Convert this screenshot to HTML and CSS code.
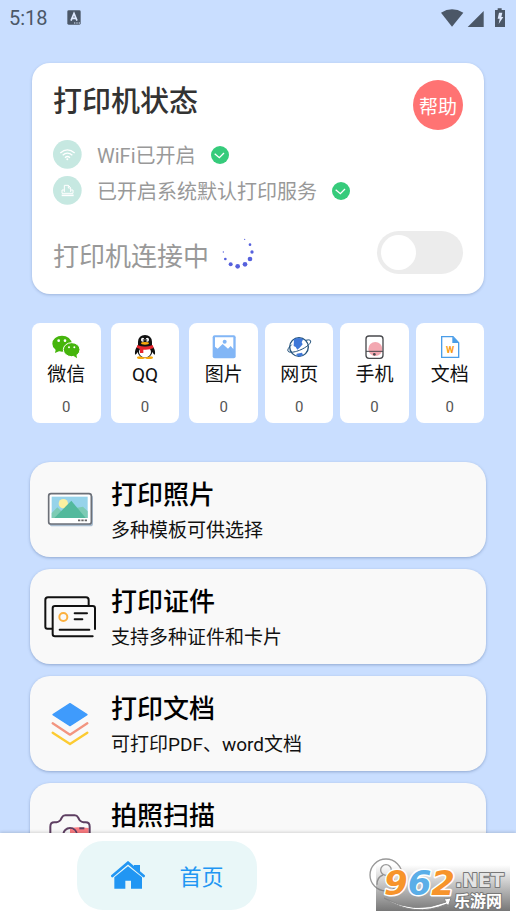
FILE: index.html
```html
<!DOCTYPE html>
<html lang="zh-CN">
<head>
    <meta charset="UTF-8">
    <meta name="viewport" content="width=device-width, initial-scale=1.0">
    <title>打印机</title>
    <link rel="stylesheet" href="styles.css">
</head>
<body>

    <!-- system bar -->
    <header class="sysbar">
        <span class="time">5:18</span>
        <svg class="ime" width="14" height="15" viewBox="0 0 42 45">
            <rect x="1" y="1" width="40" height="43" rx="4" fill="#4b5767"/>
            <path d="M12 32 L21 10 L30 32 M15 25 H27" fill="none" stroke="#dfeaff" stroke-width="5"/>
            <path d="M21 39h4m3 0h4m3 0h4" stroke="#dfeaff" stroke-width="3"/>
        </svg>
        <svg class="signals" width="66" height="20" viewBox="0 0 198 60">
            <path d="M0 14 Q33 -6 67 14 L33 56 Z" fill="#4b5767"/>
            <path d="M80 57 L128 9 V57 Z" fill="#4b5767"/>
            <path d="M170 1h12v5h10v51h-30V6h8z" fill="#4b5767"/>
            <path d="M174 14h10l-3 13h6l-14 21 3-16h-6z" fill="#dfeaff"/>
        </svg>
    </header>

    <main class="content">
        <!-- printer status -->
        <section class="status">
            <div class="status-head">
                <h1>打印机状态</h1>
                <button class="help" type="button">帮助</button>
            </div>
            <ul class="checks">
                <li>
                    <svg width="29" height="29" viewBox="0 0 87 87">
                        <circle cx="43" cy="43" r="43" fill="#c6e8e1"/>
                        <g fill="none" stroke="#fff" stroke-width="4">
                            <path d="M22 39 Q43 20 65 39"/>
                            <path d="M29 46 Q43 33 58 46"/>
                            <path d="M36 53 Q43 46 51 53"/>
                        </g>
                        <circle cx="43" cy="58" r="3" fill="#fff"/>
                    </svg>
                    <span>WiFi已开启</span>
                    <svg width="18" height="18" viewBox="0 0 54 54">
                        <circle cx="27" cy="27" r="27" fill="#36cb7b"/>
                        <path d="M11 23 L25 35 L39 21" fill="none" stroke="#fff" stroke-width="4"/>
                    </svg>
                </li>
                <li>
                    <svg width="29" height="29" viewBox="0 0 87 87">
                        <circle cx="43" cy="43" r="43" fill="#c6e8e1"/>
                        <g fill="none" stroke="#fff" stroke-width="3">
                            <path d="M34 48V28H46L53 35V48M46 28V36H53"/>
                            <path d="M34 42H27V52H60V42H53"/>
                            <path d="M26 58H62" stroke-width="5"/>
                        </g>
                    </svg>
                    <span>已开启系统默认打印服务</span>
                    <svg width="18" height="18" viewBox="0 0 54 54">
                        <circle cx="27" cy="27" r="27" fill="#36cb7b"/>
                        <path d="M11 23 L25 35 L39 21" fill="none" stroke="#fff" stroke-width="4"/>
                    </svg>
                </li>
            </ul>
            <div class="connect">
                <label for="link">打印机连接中</label>
                <svg width="32" height="32" viewBox="0 0 96 96" fill="#5661dd">
                    <circle cx="68" cy="7" r="2"/>
                    <circle cx="84" cy="23" r="4"/>
                    <circle cx="90" cy="45" r="5"/>
                    <circle cx="84" cy="66" r="7"/>
                    <circle cx="69" cy="82" r="7"/>
                    <circle cx="47" cy="88" r="7"/>
                    <circle cx="26" cy="82" r="6"/>
                    <circle cx="10" cy="66" r="4"/>
                    <circle cx="4" cy="45" r="2"/>
                </svg>
                <input class="switch" type="checkbox" id="link">
            </div>
        </section>

        <!-- sources -->
        <section class="sources">
            <div class="group">
                <button class="tile" type="button">
                    <svg width="28" height="24" viewBox="0 0 84 72">
                        <path d="M12 40 L9 54 L24 47Z" fill="#45b50c"/>
                        <ellipse cx="30" cy="26" rx="29" ry="24" fill="#45b50c"/>
                        <circle cx="20" cy="17" r="4" fill="#fff"/>
                        <circle cx="39" cy="17" r="4" fill="#fff"/>
                        <ellipse cx="59" cy="44" rx="25" ry="21" fill="#45b50c" stroke="#fff" stroke-width="3"/>
                        <path d="M64 62 L75 70 L73 56Z" fill="#45b50c"/>
                        <circle cx="51" cy="37" r="3" fill="#fff"/>
                        <circle cx="67" cy="37" r="3" fill="#fff"/>
                    </svg>
                    <span class="label">微信</span>
                    <span class="count">0</span>
                </button>
                <button class="tile" type="button">
                    <svg width="28" height="24" viewBox="0 0 84 72">
                        <ellipse cx="30" cy="68" rx="12" ry="4" fill="#f9a90a"/>
                        <ellipse cx="54" cy="68" rx="12" ry="4" fill="#f9a90a"/>
                        <path d="M19 34 Q10 45 12 59 Q16 59 20 51 Q22 67 42 67 Q62 67 64 51 Q68 59 72 59 Q74 45 65 34Z" fill="#111"/>
                        <ellipse cx="42" cy="51" rx="18" ry="16" fill="#fff"/>
                        <path d="M21 35 V20 Q23 0 42 0 Q61 0 63 20 V35Z" fill="#111"/>
                        <ellipse cx="35" cy="14" rx="5" ry="6" fill="#fff"/>
                        <ellipse cx="49" cy="14" rx="5" ry="6" fill="#fff"/>
                        <circle cx="37" cy="15" r="2" fill="#111"/>
                        <circle cx="47" cy="15" r="2" fill="#111"/>
                        <ellipse cx="42" cy="25" rx="12" ry="4" fill="#f9a90a"/>
                        <path d="M19 30 Q42 41 65 30 L68 39 Q54 46 37 44 V54 H27 V42 L17 38Z" fill="#e8242c"/>
                    </svg>
                    <span class="label">QQ</span>
                    <span class="count">0</span>
                </button>
                <button class="tile" type="button">
                    <svg width="28" height="24" viewBox="0 0 84 72">
                        <rect x="8" y="1" width="69" height="69" rx="6" fill="#82b6f6"/>
                        <path d="M15 7 H70 V42 L62 33 L54 41 L38 27 L23 41 L15 35Z" fill="#fff"/>
                        <circle cx="44" cy="20" r="6" fill="#82b6f6"/>
                    </svg>
                    <span class="label">图片</span>
                    <span class="count">0</span>
                </button>
            </div>
            <div class="group group-tight">
                <button class="tile" type="button">
                    <svg width="28" height="24" viewBox="0 0 84 72">
                        <circle cx="42" cy="36" r="28" fill="#fff" stroke="#23527c" stroke-width="4"/>
                        <path d="M27 13 Q40 5 55 12 L50 22 L53 28 L44 38 L37 44 L32 36 L26 33Z" fill="#3f78d8"/>
                        <path d="M35 56 L51 53 L54 60 L44 65 L34 61Z" fill="#3f78d8"/>
                        <path d="M20 29 C0 47 7 56 31 50 C58 43 83 24 76 16 Q73 13 62 16" fill="none" stroke="#23527c" stroke-width="3"/>
                    </svg>
                    <span class="label">网页</span>
                    <span class="count">0</span>
                </button>
                <button class="tile" type="button">
                    <svg width="28" height="24" viewBox="0 0 84 72">
                        <circle cx="46" cy="42" r="21" fill="#f3a8b1"/>
                        <rect x="18" y="3" width="51" height="67" rx="9" fill="none" stroke="#48494d" stroke-width="4"/>
                        <path d="M18 49H69" stroke="#48494d" stroke-width="3"/>
                        <circle cx="43" cy="58" r="4" fill="#48494d"/>
                    </svg>
                    <span class="label">手机</span>
                    <span class="count">0</span>
                </button>
                <button class="tile" type="button">
                    <svg width="28" height="24" viewBox="0 0 84 72">
                        <path d="M17 5 H51 L68 23 V67 H17Z" fill="#fff" stroke="#4a9de8" stroke-width="4"/>
                        <path d="M49 5 L69 24 H49Z" fill="#4a9de8"/>
                        <text class="doc-w" x="42" y="53" text-anchor="middle">W</text>
                    </svg>
                    <span class="label">文档</span>
                    <span class="count">0</span>
                </button>
            </div>
        </section>

        <!-- print actions -->
        <nav class="actions">
            <a class="action" href="#photo">
                <span class="pic">
                    <svg width="52" height="44" viewBox="0 0 156 132">
                        <rect x="17" y="21" width="130" height="94" rx="8" fill="#a9bdd0"/>
                        <rect x="14" y="17" width="128" height="91" rx="7" fill="#fff" stroke="#6c7078" stroke-width="5"/>
                        <rect x="23" y="26" width="108" height="64" fill="#96d3ea"/>
                        <circle cx="58" cy="47" r="14" fill="#fbf0a0"/>
                        <path d="M23 75 L40 58 L60 77 L95 60 L117 56 L131 70 V90 H23Z" fill="#7ccbb4"/>
                        <path d="M31 90 L82 38 L125 90Z" fill="#53b99c"/>
                        <path d="M102 97h7m3 0h7m3 0h7" stroke="#666" stroke-width="5"/>
                    </svg>
                </span>
                <span class="text"><b>打印照片</b><small>多种模板可供选择</small></span>
            </a>
            <a class="action" href="#card">
                <span class="pic">
                    <svg width="52" height="42" viewBox="0 0 156 126" fill="none" stroke="#111" stroke-width="6" stroke-linecap="round">
                        <path d="M24 98 H10 Q4 98 4 92 V12 Q4 4 12 4 H126 Q134 4 134 12 V29"/>
                        <path d="M153 99 V37 Q153 30 146 30 H33 Q26 30 26 37 V114 Q26 121 33 121 H146"/>
                        <circle cx="58" cy="63" r="12" stroke="#fbb03f"/>
                        <path d="M92 52H129M92 70H115M47 101H136"/>
                    </svg>
                </span>
                <span class="text"><b>打印证件</b><small>支持多种证件和卡片</small></span>
            </a>
            <a class="action" href="#doc">
                <span class="pic">
                    <svg width="38" height="44" viewBox="0 0 114 132" fill="none" stroke-width="7" stroke-linecap="round" stroke-linejoin="round">
                        <path d="M57 5 L108 38 L57 71 L6 38Z" fill="#3f9bfc" stroke="#3f9bfc" stroke-width="4"/>
                        <path d="M5 64 L57 98 L109 64" stroke="#f29580"/>
                        <path d="M5 92 L57 126 L109 92" stroke="#fccb32"/>
                    </svg>
                </span>
                <span class="text"><b>打印文档</b><small>可打印PDF、word文档</small></span>
            </a>
            <a class="action" href="#scan">
                <span class="pic">
                    <svg width="42" height="34" viewBox="0 0 126 102" fill="none" stroke="#5e3f62" stroke-width="6">
                        <path d="M54 45 Q73 36 119 42 V82 H54Z" fill="#fb7b80" stroke="none"/>
                        <path d="M16 25 Q30 25 35 17 L39 10 Q42 4 49 4 H77 Q84 4 87 10 L91 17 Q96 25 110 25 Q122 25 122 38 V86 Q122 98 110 98 H16 Q4 98 4 86 V38 Q4 25 16 25Z"/>
                        <circle cx="63" cy="62" r="20" fill="#f9f9f9"/>
                        <path d="M63 44 A18 18 0 0 1 63 80Z" fill="#fb7b80" stroke="none"/>
                        <path d="M91 43H106"/>
                    </svg>
                </span>
                <span class="text"><b>拍照扫描</b></span>
            </a>
        </nav>
    </main>

    <!-- bottom tabs -->
    <nav class="tabs">
        <a class="tab active" href="#home">
            <svg width="34" height="28" viewBox="0 0 102 84">
                <path d="M4 45 L51 5 L98 45" fill="none" stroke="#2196f3" stroke-width="8" stroke-linecap="round"/>
                <path d="M69 12H87V33L69 20Z" fill="#2196f3"/>
                <path d="M10 49 L51 16 L93 49 V83 H60 V59 H43 V83 H10Z" fill="#2196f3"/>
            </svg>
            <span>首页</span>
        </a>
        <a class="tab" href="#me" aria-label="我的">
            <svg width="34" height="34" viewBox="0 0 102 102" fill="none" stroke="#999" stroke-width="4">
                <circle cx="51" cy="51" r="48"/>
                <circle cx="51" cy="36" r="16"/>
                <path d="M24 80 Q24 57 42 51 M60 51 Q78 57 78 80Z"/>
            </svg>
        </a>
    </nav>

    <svg class="mark" width="134" height="56" viewBox="0 -8 134 56">
        <defs>
            <linearGradient id="fade" x1="0" y1="0" x2="0" y2="1">
                <stop offset="0" stop-color="#777" stop-opacity="0"/>
                <stop offset="1" stop-color="#777" stop-opacity="1"/>
            </linearGradient>
        </defs>
        <rect width="134" height="46" fill="url(#fade)"/>
        <path d="M8 33 Q38 50 70 37 L68 34 L75 33 L72 42 L71 39 Q38 53 8 33Z" fill="#fff" stroke="#888" stroke-width="1"/>
        <text class="mark-num" x="8" y="30"><tspan class="orange">9</tspan><tspan class="blue">6</tspan><tspan class="orange">2</tspan></text>
        <text class="mark-net" x="79" y="22">.NET</text>
        <text class="mark-cn" x="78" y="42">乐游网</text>
    </svg>

</body>
</html>
```
FILE: styles.css
```css
* {
    margin: 0;
    padding: 0;
    box-sizing: border-box;
}

body {
    display: flex;
    flex-direction: column;
    height: 100vh;
    background: #c9deff;
    font-family: Roboto, 'Noto Sans CJK SC', sans-serif;
    color: #111;
    position: relative;
    overflow: hidden;
}

svg {
    display: block;
    flex: none;
}

button {
    border: none;
    font-family: inherit;
    cursor: pointer;
}

a {
    color: inherit;
    text-decoration: none;
}

/* system bar */
.sysbar {
    display: flex;
    align-items: center;
    height: 35px;
    padding: 0 9px;
    flex: none;
}

.time {
    font-size: 20px;
    color: #4b5767;
}

.ime {
    margin-left: 19px;
}

.signals {
    margin-left: auto;
}

.content {
    flex: 1;
    min-height: 0;
    padding: 28px 30px 0;
    overflow-y: auto;
    scrollbar-width: none;
}

/* printer status */
.status {
    margin: 0 2px;
    padding: 17px 21px 20px;
    background: #fff;
    border-radius: 18px;
    box-shadow: 0 1px 3px rgba(60, 90, 140, 0.3);
}

.status-head {
    display: flex;
    justify-content: space-between;
    align-items: flex-start;
    margin-bottom: 10px;
}

h1 {
    font-size: 29px;
    font-weight: 500;
    line-height: 44px;
    color: #333;
}

.help {
    width: 50px;
    height: 50px;
    border-radius: 50%;
    background: #ff7373;
    color: #fff;
    font-size: 19px;
}

.checks {
    display: grid;
    gap: 7px;
    list-style: none;
}

.checks li {
    display: flex;
    align-items: center;
    gap: 15px;
    height: 29px;
    font-size: 20px;
    color: #999;
}

.connect {
    display: flex;
    align-items: center;
    gap: 13px;
    margin-top: 26px;
    font-size: 26px;
    color: #999;
}

.connect label {
    padding-top: 4px;
}

.switch {
    appearance: none;
    width: 86px;
    height: 43px;
    margin-left: auto;
    padding: 4px;
    border-radius: 22px;
    background: #ececec;
}

.switch::before {
    content: '';
    display: block;
    width: 35px;
    height: 35px;
    border-radius: 50%;
    background: #fff;
}

.switch:checked {
    background: #36cb7b;
}

.switch:checked::before {
    margin-left: auto;
}

/* sources */
.sources {
    display: flex;
    gap: 7px;
    margin: 29px 2px 0;
}

.group {
    display: flex;
    flex: 226;
    gap: 10px;
}

.group-tight {
    flex: 219;
    gap: 7px;
}

.tile {
    display: flex;
    flex-direction: column;
    align-items: center;
    flex: 1;
    padding: 12px 0 6px;
    background: #fff;
    border-radius: 8px;
    color: #111;
}

.doc-w {
    font: bold 28px Roboto, sans-serif;
    fill: #f99a13;
}

.label {
    font-size: 19px;
    line-height: 32px;
}

.count {
    margin-top: 6px;
    font-size: 15px;
    line-height: 20px;
    color: #555;
}

/* print actions */
.actions {
    display: grid;
    gap: 12px;
    margin-top: 39px;
}

.action {
    display: flex;
    align-items: center;
    gap: 15px;
    height: 95px;
    padding: 0 14px;
    background: #f9f9f9;
    border-radius: 20px;
    box-shadow: 0 1px 3px rgba(60, 90, 140, 0.4);
}

.pic {
    display: flex;
    justify-content: center;
    width: 52px;
}

.text {
    display: grid;
    align-self: stretch;
    align-content: start;
    padding-top: 15px;
}

.text b {
    font-size: 26px;
    font-weight: 500;
    line-height: 36px;
    color: #000;
}

.text small {
    font-size: 19px;
    line-height: 36px;
}

/* bottom tabs */
.tabs {
    display: flex;
    align-items: center;
    gap: 112px;
    flex: none;
    height: 84px;
    padding-left: 15%;
    background: #fff;
    box-shadow: 0 -1px 3px rgba(0, 0, 0, 0.15);
    position: relative;
}

.tab.active {
    display: flex;
    align-items: center;
    justify-content: center;
    gap: 34px;
    width: 180px;
    height: 69px;
    border-radius: 26px;
    background: #e9f7f8;
    color: #2196f3;
    font-size: 22px;
}

/* site mark over the tab bar */
.mark {
    position: absolute;
    right: 6px;
    bottom: 4px;
}

.mark text {
    paint-order: stroke;
    stroke-linejoin: round;
}

.mark-num {
    font: italic bold 34px 'DejaVu Sans', sans-serif;
    stroke: #fff;
    stroke-width: 3px;
}

.mark-net {
    font: bold 19px 'DejaVu Sans', sans-serif;
    fill: #e4e4e4;
    stroke: #777;
    stroke-width: 2px;
}

.mark-cn {
    font: bold 16px 'Noto Sans CJK SC', sans-serif;
    fill: #fff;
    stroke: #777;
    stroke-width: 2px;
}

.orange {
    fill: #f7942b;
}

.blue {
    fill: #5aaee8;
}
```
